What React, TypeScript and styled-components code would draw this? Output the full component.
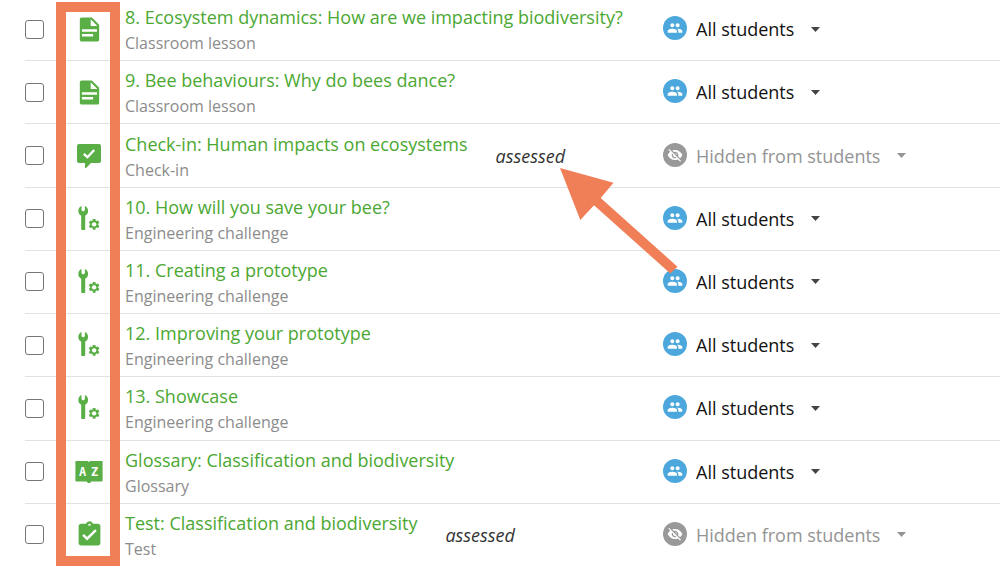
import React from "react";
import styled, { createGlobalStyle } from "styled-components";

type Kind = "lesson" | "checkin" | "engineering" | "glossary" | "test";

interface Activity {
  title: string;
  type: string;
  kind: Kind;
  assessed?: boolean;
  hidden?: boolean;
}

const activities: Activity[] = [
  { title: "8. Ecosystem dynamics: How are we impacting biodiversity?", type: "Classroom lesson", kind: "lesson" },
  { title: "9. Bee behaviours: Why do bees dance?", type: "Classroom lesson", kind: "lesson" },
  { title: "Check-in: Human impacts on ecosystems", type: "Check-in", kind: "checkin", assessed: true, hidden: true },
  { title: "10. How will you save your bee?", type: "Engineering challenge", kind: "engineering" },
  { title: "11. Creating a prototype", type: "Engineering challenge", kind: "engineering" },
  { title: "12. Improving your prototype", type: "Engineering challenge", kind: "engineering" },
  { title: "13. Showcase", type: "Engineering challenge", kind: "engineering" },
  { title: "Glossary: Classification and biodiversity", type: "Glossary", kind: "glossary" },
  { title: "Test: Classification and biodiversity", type: "Test", kind: "test", assessed: true, hidden: true },
];

const GlobalStyle = createGlobalStyle`
  *, *::before, *::after { box-sizing: border-box; }
  body {
    margin: 0;
    background: #fff;
    color: #111;
    font-family: "Open Sans", "Noto Sans", sans-serif;
    font-size: 18px;
    line-height: 24px;
  }
`;

const Page = styled.main`
  position: relative;
  height: 100vh;
  overflow: hidden;
`;

const ActivityList = styled.ul`
  display: grid;
  grid-auto-rows: 1fr;
  min-height: calc(100% + 3px);
  margin: -2px 0 0;
  padding: 0 0 0 25px;
  list-style: none;
`;

const Row = styled.li`
  display: grid;
  grid-template-columns: 38px 52px 1fr 337px;
  align-items: center;
  border-bottom: 1px solid #e2e2e2;
`;

const Checkbox = styled.input`
  appearance: none;
  width: 19px;
  height: 19px;
  margin: 0;
  border: 1px solid #767676;
  border-radius: 3px;
  background: #fff;

  &:checked {
    background: #58ad45;
  }
`;

const KindIcon = styled.span`
  display: flex;
  justify-content: center;
  color: #5aae46;

  svg {
    display: block;
    fill: currentColor;
  }
`;

const Details = styled.div`
  display: flex;
  align-items: center;
  gap: 28px;
  padding-left: 10px;
  white-space: nowrap;
`;

const Title = styled.a`
  display: block;
  color: #4ba832;
  line-height: 28px;
  text-decoration: none;
`;

const Type = styled.div`
  color: #8c8c8c;
  font-size: 16px;
`;

const Assessed = styled.em`
  color: #333;
`;

const Visibility = styled.label<{ $hidden?: boolean }>`
  display: flex;
  align-items: center;
  color: ${(p) => (p.$hidden ? "#949494" : "#111")};
`;

const Badge = styled.span<{ $hidden?: boolean }>`
  display: grid;
  place-items: center;
  width: 24px;
  height: 24px;
  margin: 0 9px 2px 0;
  border-radius: 50%;
  background: ${(p) => (p.$hidden ? "#999" : "#4ba7dc")};

  svg {
    display: block;
    fill: #fff;
  }
`;

const VisibilitySelect = styled.select`
  appearance: none;
  field-sizing: content;
  margin: 0 -9px 0 0;
  padding: 0 26px 0 0;
  border: 0;
  background: transparent;
  color: inherit;
  font: inherit;
`;

const Caret = styled.svg<{ $hidden?: boolean }>`
  fill: ${(p) => (p.$hidden ? "#949494" : "#444")};
  pointer-events: none;
`;

const Frame = styled.div`
  position: absolute;
  top: 2px;
  bottom: 0;
  left: 56px;
  width: 64px;
  border: 10px solid #f07f58;
  pointer-events: none;
`;

const Arrow = styled.svg`
  position: absolute;
  top: 168px;
  left: 560px;
  fill: #f07f58;
  pointer-events: none;
`;

function LessonIcon() {
  return (
    <svg width="29" height="29" viewBox="0 0 24 24">
      <path
        fillRule="evenodd"
        d="M14 2H5.5C4.700 2 4 2.700 4 3.500v17c0 .8.700 1.500 1.500 1.500h13c.8 0 1.500-.7 1.500-1.500V8l-6-6zm-1 7V3.500L18.500 9H13zM5.700 11.800H18.200v2H5.700zM5.700 15.700H15v2H5.700z"
      />
    </svg>
  );
}

function CheckinIcon() {
  return (
    <svg width="24" height="24" viewBox="0 0 24 24">
      <path d="M2 0h20a2 2 0 0 1 2 2v15a2 2 0 0 1-2 2h-8l-5 5c-.5.300-1 0-1-.6V19H2a2 2 0 0 1-2-2V2a2 2 0 0 1 2-2z" />
      <path d="M6.800 9.800l3.700 3.400L17.200 6" fill="none" stroke="#fff" strokeWidth="2.300" />
    </svg>
  );
}

function EngineeringIcon() {
  return (
    <svg width="22" height="26" viewBox="0 0 22 26">
      <path d="M3.500 0v4.300L5.200 5.500 6.900 4.300V0A5.400 5.400 0 0 1 7.200 9.700V23.200a.8.8 0 0 1-.8.800H4a.8.8 0 0 1-.8-.8V9.700A5.400 5.400 0 0 1 3.500 0z" />
      <g transform="translate(9.400 11.600) scale(.56)">
        <path d="M19.140 12.940c.04-.3.060-.61.060-.94 0-.32-.02-.64-.07-.94l2.030-1.580c.18-.14.230-.41.120-.61l-1.920-3.320c-.12-.22-.37-.29-.59-.22l-2.390.96c-.5-.38-1.030-.7-1.620-.94l-.36-2.540c-.04-.24-.24-.41-.48-.41h-3.840c-.24 0-.43.170-.47.410l-.36 2.540c-.59.240-1.130.570-1.620.940l-2.390-.96c-.22-.08-.47 0-.59.220L2.740 8.870c-.12.210-.08.470.12.610l2.030 1.580c-.05.300-.09.630-.09.940s.02.640.07.940l-2.030 1.580c-.18.140-.23.410-.12.610l1.920 3.320c.12.220.370.290.590.220l2.390-.96c.5.380 1.030.7 1.620.94l.36 2.540c.05.240.240.410.480.410h3.840c.24 0 .44-.17.470-.41l.36-2.540c.59-.24 1.130-.56 1.620-.94l2.390.960c.22.080.470 0 .59-.22l1.920-3.320c.12-.22.070-.47-.12-.61l-2.010-1.580z" />
        <circle cx="12" cy="12" r="3.900" fill="#fff" />
      </g>
    </svg>
  );
}

function GlossaryIcon() {
  return (
    <svg width="28" height="22" viewBox="0 0 28 22">
      <path d="M1 0h11.200c.8 0 1.300.5 1.800 1 .5-.5 1-1 1.800-1H27a.6.6 0 0 1 .6.600V19.400a1 1 0 0 1-1 1h-10.400c-.4 1-1.200 1.600-2.200 1.600s-1.800-.6-2.200-1.600H1.400a1 1 0 0 1-1-1V.6A.6.6 0 0 1 1 0z" />
      <text x="4" y="15" fill="#fff" fontFamily="DejaVu Sans Mono, monospace" fontSize="12" fontWeight="700">
        A
      </text>
      <text x="16" y="15" fill="#fff" fontFamily="DejaVu Sans Mono, monospace" fontSize="12" fontWeight="700">
        Z
      </text>
    </svg>
  );
}

function TestIcon() {
  return (
    <svg width="29" height="29" viewBox="0 0 24 24">
      <path d="M19 3h-4.180C14.400 1.840 13.300 1 12 1c-1.300 0-2.400.84-2.820 2H5c-1.100 0-2 .9-2 2v14c0 1.100.9 2 2 2h14c1.100 0 2-.9 2-2V5c0-1.100-.9-2-2-2zm-7 0c.55 0 1 .45 1 1s-.45 1-1 1-1-.45-1-1 .45-1 1-1zm-2 14l-4-4 1.410-1.410L10 14.170l6.590-6.590L18 9l-8 8z" />
    </svg>
  );
}

function PeopleIcon() {
  return (
    <svg width="16" height="16" viewBox="0 0 24 24">
      <path d="M16 11c1.660 0 2.990-1.340 2.990-3S17.660 5 16 5c-1.660 0-3 1.340-3 3s1.340 3 3 3zm-8 0c1.660 0 2.990-1.340 2.990-3S9.660 5 8 5C6.340 5 5 6.340 5 8s1.340 3 3 3zm0 2c-2.330 0-7 1.170-7 3.500V19h14v-2.500c0-2.330-4.670-3.500-7-3.500zm8 0c-.29 0-.62.020-.97.050 1.160.84 1.970 1.970 1.970 3.450V19h6v-2.500c0-2.330-4.670-3.500-7-3.500z" />
    </svg>
  );
}

function HiddenIcon() {
  return (
    <svg width="16" height="16" viewBox="0 0 24 24">
      <path d="M12 7c2.760 0 5 2.240 5 5 0 .65-.13 1.260-.36 1.830l2.920 2.920c1.510-1.260 2.700-2.890 3.430-4.750-1.730-4.390-6-7.500-11-7.500-1.400 0-2.740.25-3.980.7l2.160 2.160C10.740 7.130 11.350 7 12 7zM2 4.270l2.280 2.280.46.460C3.080 8.300 1.780 10.020 1 12c1.730 4.390 6 7.500 11 7.500 1.550 0 3.030-.3 4.380-.84l.42.420L19.730 22 21 20.730 3.270 3 2 4.270zM7.530 9.800l1.550 1.550c-.05.210-.08.430-.08.650 0 1.660 1.340 3 3 3 .22 0 .44-.03.65-.08l1.550 1.550c-.67.330-1.410.53-2.200.53-2.760 0-5-2.240-5-5 0-.79.2-1.530.53-2.200zm4.310-.78l3.150 3.150.02-.16c0-1.660-1.340-3-3-3l-.17.010z" />
    </svg>
  );
}

const icons: Record<Kind, () => React.JSX.Element> = {
  lesson: LessonIcon,
  checkin: CheckinIcon,
  engineering: EngineeringIcon,
  glossary: GlossaryIcon,
  test: TestIcon,
};

function ActivityRow({ activity }: { activity: Activity }) {
  const { title, type, kind, assessed, hidden } = activity;
  const Icon = icons[kind];
  return (
    <Row>
      <Checkbox type="checkbox" aria-label={title} />
      <KindIcon aria-hidden="true">
        <Icon />
      </KindIcon>
      <Details>
        <div>
          <Title href="#">{title}</Title>
          <Type>{type}</Type>
        </div>
        {assessed && <Assessed>assessed</Assessed>}
      </Details>
      <Visibility $hidden={hidden}>
        <Badge $hidden={hidden}>{hidden ? <HiddenIcon /> : <PeopleIcon />}</Badge>
        <VisibilitySelect aria-label={`Visibility of ${title}`} defaultValue={hidden ? "hidden" : "all"}>
          {hidden ? (
            <option value="hidden">Hidden from students</option>
          ) : (
            <option value="all">All students</option>
          )}
        </VisibilitySelect>
        <Caret $hidden={hidden} width="9" height="5" viewBox="0 0 9 5" aria-hidden="true">
          <path d="M0 0h9L4.500 5z" />
        </Caret>
      </Visibility>
    </Row>
  );
}

export default function App() {
  return (
    <>
      <GlobalStyle />
      <Page>
        <ActivityList>
          {activities.map((activity) => (
            <ActivityRow key={activity.title} activity={activity} />
          ))}
        </ActivityList>
        <Frame />
        <Arrow width="118" height="106" viewBox="0 0 118 106" aria-hidden="true">
          <path d="M0 0L53.500 14.800 40.700 30 117.500 98.700 110.300 105.500 34 37.200 20.300 52z" />
        </Arrow>
      </Page>
    </>
  );
}
